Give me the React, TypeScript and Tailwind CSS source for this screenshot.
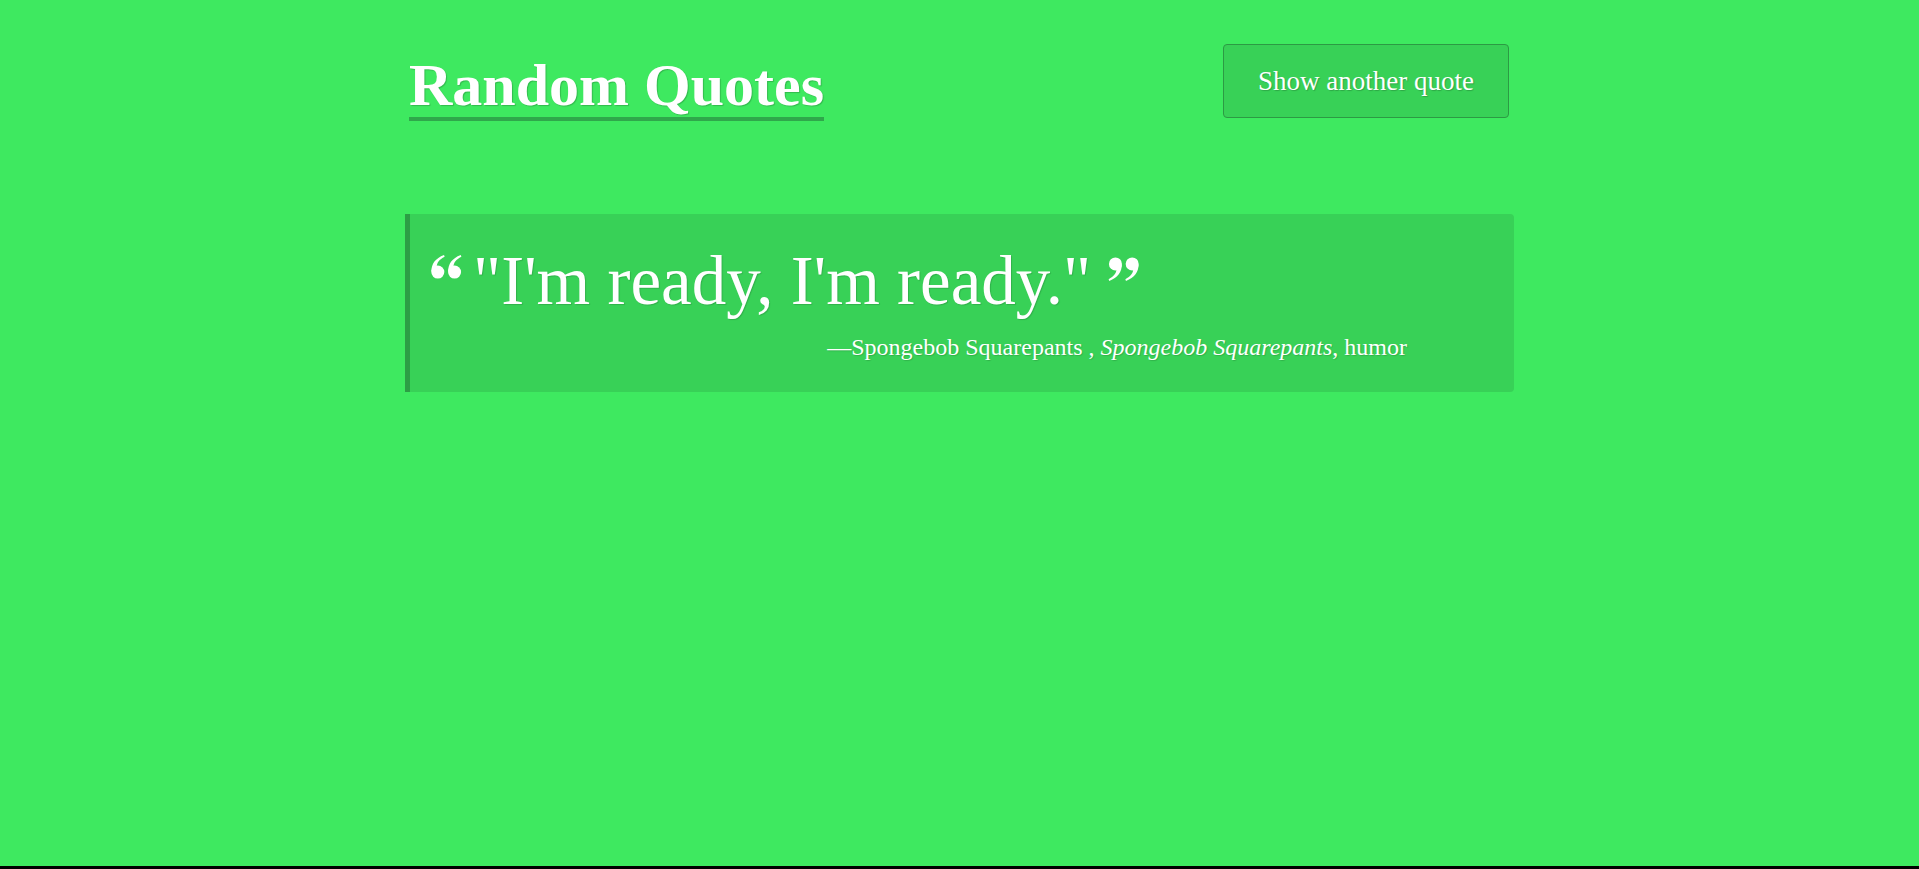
import React from "react";

const serif = { fontFamily: '"Liberation Serif", "Times New Roman", serif' };

function QuoteMark({ flip = false }: { flip?: boolean }) {
  return (
    <svg
      width="31"
      height="24"
      viewBox="0 0 30 23"
      className={flip ? "rotate-180" : ""}
      fill="white"
    >
      <g>
        <circle cx="6.6" cy="16.4" r="6.3" />
        <path d="M0.4 16 C0.4 8.5 4.2 3.2 12.6 0 L13.2 1.7 C8 4.2 5.6 7.8 5.6 11.2 Z" />
      </g>
      <g transform="translate(16.2 0)">
        <circle cx="6.6" cy="16.4" r="6.3" />
        <path d="M0.4 16 C0.4 8.5 4.2 3.2 12.6 0 L13.2 1.7 C8 4.2 5.6 7.8 5.6 11.2 Z" />
      </g>
    </svg>
  );
}

export default function App() {
  return (
    <div className="w-full h-[869px] bg-black overflow-hidden" style={serif}>
      <div className="w-full h-[866px] bg-[#3ee960] text-white">
        <div className="mx-auto w-[1109px] pt-[44px]">
          <div className="flex justify-between items-start">
            <h1 className="ml-[4px] mt-[11px] inline-block text-[60px] leading-[60px] font-bold pb-[2px] border-b-4 border-[#2fa84b] [text-shadow:1px_1px_1px_rgba(0,0,0,0.2)]">
              Random Quotes
            </h1>
            <button className="mr-[5px] w-[286px] h-[74px] rounded-[4px] border border-[#2c9a44] bg-[#38d157] text-[27px] leading-none text-white [text-shadow:1px_1px_1px_rgba(0,0,0,0.2)]">
              Show another quote
            </button>
          </div>

          <blockquote className="mt-[93px] bg-[#38d157] border-l-[5px] border-[#2c9e45] rounded-r-[4px] pl-[21px] pr-[107px] pt-[33px] pb-[33px]">
            <div className="flex items-start">
              <div className="mt-[8px]">
                <QuoteMark />
              </div>
              <p className="ml-[11px] text-[69px] leading-[69px] [text-shadow:1px_1px_1px_rgba(0,0,0,0.15)]">
                "I'm ready, I'm ready."
              </p>
              <div className="ml-[17px] mt-[10px]">
                <QuoteMark flip />
              </div>
            </div>
            <footer className="mt-[19px] flex justify-end text-[24px] leading-[24px] [text-shadow:1px_1px_1px_rgba(0,0,0,0.15)]">
              <span>
                —Spongebob Squarepants , <cite className="italic">Spongebob Squarepants</cite>, humor
              </span>
            </footer>
          </blockquote>
        </div>
      </div>
    </div>
  );
}
